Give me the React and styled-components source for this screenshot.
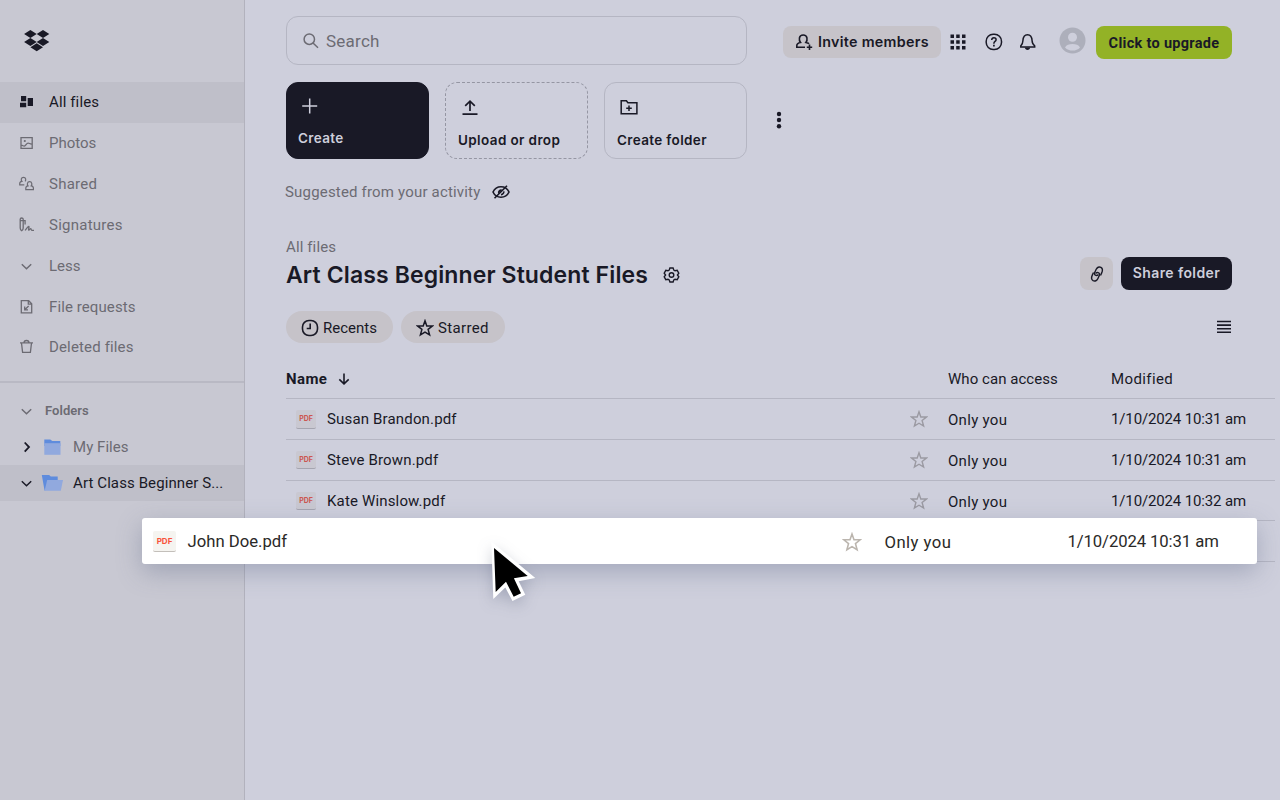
import React from "react";
import styled, { createGlobalStyle } from "styled-components";

const ink = "#191926";
const muted = "#6c6b73";
const line = "#b5b6c3";
const bodyFont = `Roboto, "Liberation Sans", sans-serif`;
const headFont = `Inter, "Liberation Sans", sans-serif`;

const GlobalStyle = createGlobalStyle`
    * {
        box-sizing: border-box;
    }

    body {
        margin: 0;
        font-family: ${bodyFont};
        font-size: 15px;
        line-height: 18px;
        color: ${ink};
        background: #cecfdc;
    }

    svg {
        display: block;
        flex: none;
    }

    button {
        font: inherit;
        color: inherit;
        border: none;
        background: none;
        padding: 0;
    }
`;

const Page = styled.div`
    position: relative;
    display: flex;
    width: 1280px;
    height: 800px;
    overflow: hidden;
`;

//Sidebar
const Sidebar = styled.aside`
    width: 245px;
    flex: none;
    background: #c8c8d2;
    border-right: 1px solid #b2b2bd;
`;

const Brand = styled.div`
    height: 82px;
    padding: 30px 0 0 24px;
`;

const Nav = styled.nav`
    display: flex;
    flex-direction: column;
    height: 301px;
    border-bottom: 2px solid #b9b9c4;
`;

const NavItem = styled.a`
    display: flex;
    align-items: center;
    gap: 13px;
    height: 40.83px;
    padding-left: 16px;
    color: ${(props) => (props.$active ? ink : muted)};
    background: ${(props) => (props.$active ? "#bfbfc9" : "transparent")};
`;

const Folders = styled.div`
    padding-top: 10px;
`;

const FoldersTitle = styled.div`
    display: flex;
    align-items: center;
    gap: 9px;
    height: 35.5px;
    padding-left: 16px;
    font-size: 13px;
    font-weight: 600;
    color: ${muted};
`;

const FolderItem = styled.a`
    display: flex;
    align-items: center;
    height: 36.4px;
    padding-left: 16px;
    color: ${(props) => (props.$active ? ink : muted)};
    background: ${(props) => (props.$active ? "#bfbfc9" : "transparent")};

    svg:nth-child(2) {
        margin: 0 10px 0 5px;
    }
`;

//Main
const Main = styled.main`
    flex: 1;
    display: flex;
    flex-direction: column;
    padding: 16px 5px 0 41px;
`;

const Text = styled.span`
    white-space: nowrap;
    letter-spacing: ${(props) => props.$track || 0}px;
`;

const TopBar = styled.header`
    display: flex;
    height: 49px;
    margin-right: 43px;
`;

const Search = styled.div`
    display: flex;
    align-items: center;
    gap: 6px;
    width: 461px;
    padding-left: 15px;
    border: 1px solid ${line};
    border-radius: 12px;
    font-size: 17px;
    color: ${muted};
`;

const TopActions = styled.div`
    flex: 1;
    display: flex;
    align-items: center;
    padding: 3px 0 0 36px;
`;

const InviteButton = styled.button`
    display: flex;
    align-items: center;
    gap: 4px;
    width: 158px;
    height: 32px;
    margin-right: 7px;
    padding-left: 12px;
    border-radius: 8px;
    background: #c6c3c9;
    font-family: ${headFont};
    font-size: 14.3px;
    font-weight: 600;
`;

const TopIcons = styled.div`
    display: flex;
    align-items: center;
    width: 148px;

    svg:nth-child(2) {
        margin-left: 16px;
    }

    svg:nth-child(3) {
        margin-left: 13.5px;
    }

    svg:nth-child(4) {
        margin: -3px 0 0 21px;
    }
`;

const UpgradeButton = styled.button`
    width: 136px;
    height: 33px;
    margin-top: 1px;
    padding-top: 2px;
    border-radius: 8px;
    background: #93b226;
    font-size: 14.5px;
    font-weight: 700;
`;

const Cards = styled.div`
    display: flex;
    align-items: center;
    gap: 16.5px;
    margin-top: 16.5px;
    height: 77px;
`;

const Card = styled.button`
    display: flex;
    flex-direction: column;
    justify-content: space-between;
    align-items: flex-start;
    width: 142.5px;
    height: 77px;
    padding: ${(props) => (props.$dark ? 13 : 14)}px 0 ${(props) => (props.$dark ? 10.5 : 9)}px ${(props) => (props.$dark ? 11 : 12)}px;
    border: 1px ${(props) => (props.$dashed ? "dashed #9596a3" : "solid " + (props.$dark ? ink : line))};
    border-radius: 12px;
    background: ${(props) => (props.$dark ? ink : "transparent")};
    color: ${(props) => (props.$dark ? "#cecfdc" : ink)};
    font-family: ${headFont};
    font-size: 13.5px;
    font-weight: 600;
`;

const MoreButton = styled.button`
    margin-left: 11px;
`;

const Suggested = styled.div`
    display: flex;
    align-items: center;
    gap: 10.5px;
    margin: 23.5px 0 0 -1px;
    height: 20px;
    color: ${muted};
`;

const FolderHeader = styled.div`
    display: flex;
    align-items: flex-end;
    height: 54px;
    margin: 36px 43px 0 0;
`;

const FolderHeading = styled.div`
    flex: 1;
    height: 54px;
    color: ${muted};
`;

const FolderTitle = styled.h1`
    display: flex;
    align-items: center;
    gap: 15px;
    margin: 0;
    height: 37px;
    font-family: ${headFont};
    font-size: 23px;
    font-weight: 600;
    color: ${ink};
`;

const LinkButton = styled.button`
    display: flex;
    align-items: center;
    justify-content: center;
    width: 33px;
    height: 33px;
    margin: 0 8px 2px 0;
    border-radius: 8px;
    background: #c6c3c9;
`;

const ShareButton = styled.button`
    width: 111px;
    height: 33px;
    margin-bottom: 2px;
    padding-bottom: 1px;
    border-radius: 8px;
    background: ${ink};
    color: #cecfdc;
    font-family: ${headFont};
    font-size: 14px;
    font-weight: 600;
`;

const Filters = styled.div`
    display: flex;
    align-items: center;
    gap: 8px;
    height: 32px;
    margin: 19px 43px 0 0;
`;

const Chip = styled.button`
    display: flex;
    align-items: center;
    gap: 4px;
    width: ${(props) => props.$width}px;
    height: 32px;
    padding: 1px 0 0 15px;
    border-radius: 16px;
    background: #c6c3c9;
`;

const ViewToggle = styled.button`
    margin-left: auto;
`;

const Table = styled.div`
    margin-top: 15px;
`;

const HeadRow = styled.div`
    display: grid;
    grid-template-columns: 662px 163px 1fr;
    align-items: center;
    height: 41px;
    padding-top: 1px;
    border-bottom: 1px solid ${line};
`;

const SortName = styled.div`
    display: flex;
    align-items: center;
    gap: 11px;
    font-weight: 700;
`;

const Row = styled.div`
    display: grid;
    grid-template-columns: 31px 583px 38px 163px 1fr;
    align-items: center;
    height: 40.8px;
    padding: 1px 0 0 10px;
    border-bottom: 1.5px solid ${line};
`;

const AccessCell = styled.div`
    padding-top: 2px;
`;

const PdfBadge = styled.span`
    display: flex;
    align-items: center;
    justify-content: center;
    width: ${(props) => (props.$large ? 23 : 20)}px;
    height: ${(props) => (props.$large ? 21 : 18.5)}px;
    border-radius: 2px;
    background: ${(props) => (props.$large ? "#f5f4f0" : "#c9c8d1")};
    border-bottom: 1px solid ${(props) => (props.$large ? "#c3bfba" : "#a5a5b0")};
    color: ${(props) => (props.$large ? "#f9533a" : "#cc5650")};
    font-family: ${headFont};
    font-size: ${(props) => (props.$large ? 8 : 7)}px;
    font-weight: 700;
    line-height: 1;
`;

//The row being dragged floats over the page
const DraggedRow = styled.div`
    position: absolute;
    left: 142px;
    top: 518px;
    width: 1115px;
    height: 45.5px;
    display: grid;
    grid-template-columns: 34.5px 654.5px 42.5px 183px 1fr;
    align-items: center;
    padding: 1.5px 0 0 11px;
    border-radius: 3px;
    background: #fff;
    color: #2a2927;
    font-size: 16.7px;
    box-shadow: 0 8px 24px rgba(90, 100, 130, 0.36);
`;

const Cursor = styled.svg`
    position: absolute;
    left: 485px;
    top: 538px;
    filter: drop-shadow(0 5px 7px rgba(60, 70, 100, 0.25));
`;

function Icon({ width = 20, height = 20, weight = 1.3, color = "currentColor", children }) {
    return (
        <svg width={width} height={height} viewBox={`0 0 ${width} ${height}`} fill="none" stroke={color} strokeWidth={weight}>
            {children}
        </svg>
    );
}

const ChevronDown = ({ color }) => (
    <Icon weight={1.5} color={color}>
        <path d="M5.8 8.3l4.7 4.4 4.7-4.4" />
    </Icon>
);

const Star = ({ size = 18, color, weight = 1.4 }) => (
    <svg width={size} height={size} viewBox="0 0 18 18" fill="none" stroke={color || "currentColor"} strokeWidth={weight}>
        <path d="M9 1.8l1.8 5.2h5.6l-4.3 3.4 1.5 5.6L9 13.2 4.4 16l1.5-5.6L1.6 7h5.6z" />
    </svg>
);

const navItems = [
    {
        name: "All files",
        track: 0.12,
        icon: (
            <Icon>
                <path fill="currentColor" stroke="none" d="M5 4h5.2v5.2H5zM4 10.7h6.2v4.6H4zM11.7 6H17v8h-5.3z" />
            </Icon>
        ),
    },
    {
        name: "Photos",
        track: 0,
        icon: (
            <Icon>
                <path d="M5 4.6h11.2v10.8H5zM5 12.2c1.8-.2 2.1 1 3.3.9 1.6-.1 2-3 3.8-3 1.6 0 1.6 1.2 4.1 1" />
                <circle cx="8.8" cy="8" r="1.1" fill="currentColor" stroke="none" />
            </Icon>
        ),
    },
    {
        name: "Shared",
        track: 0.25,
        icon: (
            <Icon weight={1.2}>
                <path d="M8.3 10.9H3.7V9.7c0-1.3.8-2.1 2.2-2.3-1-1.1-1-4.1 1.6-4.1s2.6 3 1.6 4.1" />
                <path d="M9.8 15.7v-1.5c0-1.3.8-2.1 2.2-2.3-1-1.2-1-4.2 1.6-4.2s2.6 3 1.6 4.2c1.4.2 2.2 1 2.2 2.3v1.5z" />
            </Icon>
        ),
    },
    {
        name: "Signatures",
        track: 0.25,
        icon: (
            <Icon weight={1.3}>
                <path d="M4.2 13V4.3C4.2 3.5 5 3 5.7 3s1.5.5 1.5 1.3V13c0 1.5-.6 2.3-1.5 2.8C4.8 15.3 4.2 14.5 4.2 13zM4.2 5.6h4.9v3.8" />
                <path d="M9 15.4c1.4-1.6 2.7-4 3.7-3.9 1 .1-.8 3.5.1 3.6.8.1 1.2-1.5 2-1.4.7.1.2 1.6 1 1.6H18" />
            </Icon>
        ),
    },
    { name: "Less", track: 0, icon: <ChevronDown /> },
    {
        name: "File requests",
        track: 0.1,
        icon: (
            <Icon>
                <path d="M5.3 3.7h7.4l3 3v9.1H5.3zM12.3 4v3.2h3.2M12.6 9l-3.8 3.8M8.7 9.6v3.3H12" />
            </Icon>
        ),
    },
    {
        name: "Deleted files",
        track: 0.15,
        icon: (
            <Icon>
                <path d="M4 5.9h13M5.5 6l1.1 9.4h7.8L15.5 6M8 5.8c0-1.5.8-2.3 2.5-2.3s2.5.8 2.5 2.3" />
            </Icon>
        ),
    },
];

const files = [
    { name: "Susan Brandon.pdf", modified: "1/10/2024 10:31 am" },
    { name: "Steve Brown.pdf", modified: "1/10/2024 10:31 am" },
    { name: "Kate Winslow.pdf", modified: "1/10/2024 10:32 am" },
];

function SidePanel() {
    return (
        <Sidebar>
            <Brand>
                <svg width="26" height="22" viewBox="0 0 26 22" fill={ink}>
                    <path d="M6.4 0l6.3 4-6.3 4L.1 4zM19 0l6.3 4L19 8l-6.3-4zM6.4 8l6.3 4-6.3 4L.1 12zM19 8l6.3 4-6.3 4-6.3-4zM12.7 13.3l6.3 4-6.3 4-6.3-4z" />
                </svg>
            </Brand>
            <Nav>
                {navItems.map((item, i) => (
                    <NavItem key={item.name} $active={i === 0}>
                        {item.icon}
                        <Text $track={item.track}>{item.name}</Text>
                    </NavItem>
                ))}
            </Nav>
            <Folders>
                <FoldersTitle>
                    <ChevronDown />
                    <Text $track={0.05}>Folders</Text>
                </FoldersTitle>
                <FolderItem>
                    <Icon weight={1.8} color={ink}>
                        <path d="M8.7 5.5l4.3 4.6-4.3 4.6" />
                    </Icon>
                    <svg width="22" height="20" viewBox="0 0 22 20">
                        <path fill="#5f8cdd" d="M3.3 2.5h6l2 1.4h8v5h-16z" />
                        <path fill="#91a9de" d="M3.3 6.2h16.2v11.6H3.3z" />
                    </svg>
                    <Text $track={0.05}>My Files</Text>
                </FolderItem>
                <FolderItem $active>
                    <ChevronDown color={ink} />
                    <svg width="22" height="20" viewBox="0 0 22 20">
                        <path fill="#5f8cdd" d="M.8 2h7.3l1.7 1.6h6.9V9L3.6 17.8z" />
                        <path fill="#91a9de" d="M6.2 7H22l-2.2 10.8H3.6z" />
                    </svg>
                    <Text $track={0.1}>Art Class Beginner S...</Text>
                </FolderItem>
            </Folders>
        </Sidebar>
    );
}

function Header() {
    return (
        <TopBar>
            <Search>
                <Icon width={18} height={18} weight={1.5}>
                    <circle cx="7.3" cy="7.2" r="5.2" />
                    <path d="M11 11l5 4.8" />
                </Icon>
                <Text $track={0.25}>Search</Text>
            </Search>
            <TopActions>
                <InviteButton>
                    <Icon width={19} height={20} weight={1.6}>
                        <path d="M10 15.3H1.8v-1.5c0-2 1.3-2.9 3.7-3.3-1.7-2.2-2-7.5 2.7-7.5s4.4 5.3 2.7 7.5c1.4.2 2.5.6 3.1 1.3M14.5 12.5v5.4M11.8 15.2h5.4" />
                    </Icon>
                    <Text $track={0.3}>Invite members</Text>
                </InviteButton>
                <TopIcons>
                    <Icon width={20} height={20}>
                        <path fill="currentColor" stroke="none" d="M2.5 2.5H6V6H2.5zM8.2 2.5h3.5V6H8.2zM14 2.5h3.5V6H14zM2.5 8.2H6v3.5H2.5zM8.2 8.2h3.5v3.5H8.2zM14 8.2h3.5v3.5H14zM2.5 14H6v3.5H2.5zM8.2 14h3.5v3.5H8.2zM14 14h3.5v3.5H14z" />
                    </Icon>
                    <Icon weight={1.5}>
                        <rect x="2.2" y="2.2" width="15.3" height="15.3" rx="7" />
                        <path d="M7.7 8c.1-1.5 1-2.2 2.2-2.2 1.3 0 2.2.8 2.2 1.9 0 1.7-2.2 1.8-2.2 3.5v.5" />
                        <path strokeWidth="1.7" d="M9.9 12.7v1.7" />
                    </Icon>
                    <Icon weight={1.5}>
                        <path d="M2.8 15v-1.2c1.5-1.2 2-2.4 2.1-5C5.1 5 6.5 2.8 9.5 2.8S13.9 5 14.1 8.8c.1 2.6.6 3.8 2.6 5V15z" />
                        <path fill="currentColor" stroke="none" d="M6.8 15.5h5.4c-.3 1.7-1.2 2.4-2.7 2.4s-2.4-.7-2.7-2.4z" />
                    </Icon>
                    <svg width="27" height="27" viewBox="0 0 27 27">
                        <circle cx="13.5" cy="13.5" r="13" fill="#adafbb" />
                        <circle cx="13.5" cy="10.3" r="4.5" fill="#cecfdc" />
                        <path fill="#cecfdc" d="M6 20.5c1.5-2.8 4-3.6 7.5-3.6s6 .8 7.5 3.6c-2 2.2-4.5 3.1-7.5 3.1S8 22.7 6 20.5z" />
                    </svg>
                </TopIcons>
                <UpgradeButton>
                    <Text $track={0.3}>Click to upgrade</Text>
                </UpgradeButton>
            </TopActions>
        </TopBar>
    );
}

function FileTable() {
    return (
        <Table>
            <HeadRow>
                <SortName>
                    <Text $track={0.4}>Name</Text>
                    <Icon width={12} height={14} weight={1.6}>
                        <path d="M6 1.5v10.2M1.3 7.3L6 11.8l4.7-4.5" />
                    </Icon>
                </SortName>
                <Text $track={0.05}>Who can access</Text>
                <Text $track={0.4}>Modified</Text>
            </HeadRow>
            {files.map((file) => (
                <Row key={file.name}>
                    <PdfBadge>PDF</PdfBadge>
                    <Text $track={0.16}>{file.name}</Text>
                    <Star color="#9b9aa2" />
                    <AccessCell>
                        <Text $track={0.3}>Only you</Text>
                    </AccessCell>
                    <Text $track={-0.14}>{file.modified}</Text>
                </Row>
            ))}
            <Row />
        </Table>
    );
}

function App() {
    return (
        <Page>
            <GlobalStyle />
            <SidePanel />
            <Main>
                <Header />
                <Cards>
                    <Card $dark>
                        <Icon weight={1.5}>
                            <path d="M11.7 2.5v15M4.2 10h15" />
                        </Icon>
                        <Text $track={0.35}>Create</Text>
                    </Card>
                    <Card $dashed>
                        <Icon weight={1.7}>
                            <path d="M4.5 17.2h15M12 14V4.5M7.2 8.8L12 4.2l4.8 4.6" />
                        </Icon>
                        <Text $track={0.38}>Upload or drop</Text>
                    </Card>
                    <Card>
                        <Icon width={22} weight={1.5}>
                            <path d="M4.2 3.8h5.2l1.5 2h9v11H4.2zM12 8.5v5.6M9.2 11.3h5.6" />
                        </Icon>
                        <Text $track={0.35}>Create folder</Text>
                    </Card>
                    <MoreButton>
                        <svg width="10" height="20" viewBox="0 0 10 20" fill={ink}>
                            <circle cx="5" cy="4" r="2.2" />
                            <circle cx="5" cy="10" r="2.2" />
                            <circle cx="5" cy="16.2" r="2.2" />
                        </svg>
                    </MoreButton>
                </Cards>
                <Suggested>
                    <Text $track={0.18}>Suggested from your activity</Text>
                    <Icon color={ink} weight={1.6}>
                        <path d="M2 10c1.5-3.3 4.2-5.2 8-5.2s6.5 1.9 8 5.2c-1.5 3.3-4.2 5.2-8 5.2S3.5 13.3 2 10zM3.5 16.2L16 3.8" />
                        <path fill={ink} stroke="none" d="M7.2 12A3.2 3.2 0 0 1 11.5 7.7z" />
                        <path d="M12.8 9.3c.2 1.8-.9 3.2-2.8 3.4" />
                    </Icon>
                </Suggested>
                <FolderHeader>
                    <FolderHeading>
                        <Text $track={0.12}>All files</Text>
                        <FolderTitle>
                            <Text $track={0.12}>Art Class Beginner Student Files</Text>
                            <Icon width={17} height={18} weight={1.4}>
                                <path d="M6.9 2h3.2l.7 2.1 1.2.7 2.2-.5 1.6 2.8L14.4 9l1.4 1.9-1.6 2.8-2.2-.5-1.2.7-.7 2.1H6.9l-.7-2.1-1.2-.7-2.2.5-1.6-2.8L2.6 9 1.2 7.1l1.6-2.8 2.2.5 1.2-.7z" />
                                <circle cx="8.5" cy="9" r="2.3" />
                            </Icon>
                        </FolderTitle>
                    </FolderHeading>
                    <LinkButton>
                        <Icon width={20} height={20} weight={1.4}>
                            <path d="M13.5 11.5l1.2-2.6c.9-2 1-4.5-.8-5.6-1.9-1-3.8.2-4.7 2L7.800 8.200c-.7 1.500-.2 2.900 1.100 3.200.9.200 1.700-.1 2.600-.7" />
                            <path d="M6.5 8.5l-1.2 2.6c-.9 2-1 4.5.8 5.6 1.9 1 3.8-.2 4.7-2l1.4-2.9c.7-1.500.2-2.900-1.100-3.200-.9-.2-1.700.1-2.600.7" />
                        </Icon>
                    </LinkButton>
                    <ShareButton>
                        <Text $track={0.4}>Share folder</Text>
                    </ShareButton>
                </FolderHeader>
                <Filters>
                    <Chip $width={107}>
                        <Icon width={18} height={18} weight={1.6}>
                            <rect x="1.5" y="1.5" width="15" height="15" rx="6.5" />
                            <path d="M9.2 4.5v5H5.7" />
                        </Icon>
                        <Text $track={0}>Recents</Text>
                    </Chip>
                    <Chip $width={104}>
                        <Star weight={1.5} />
                        <Text $track={0.35}>Starred</Text>
                    </Chip>
                    <ViewToggle>
                        <Icon width={16} height={14} weight={1.6}>
                            <path d="M1 1.5h14M1 5.1h14M1 8.7h14M1 12.3h14" />
                        </Icon>
                    </ViewToggle>
                </Filters>
                <FileTable />
            </Main>
            <DraggedRow>
                <PdfBadge $large>PDF</PdfBadge>
                <Text $track={0}>John Doe.pdf</Text>
                <Star size={20} color="#bbb5ae" />
                <AccessCell>
                    <Text $track={0.45}>Only you</Text>
                </AccessCell>
                <Text $track={-0.1}>1/10/2024 10:31 am</Text>
            </DraggedRow>
            <Cursor width="60" height="72" viewBox="485 538 60 72">
                <path d="M491.3 541.5L493.3 599 505.3 587.5 512.5 601 525.3 594.8 518.7 581.3 535.3 578z" fill="#fff" />
                <path d="M494 548L495.7 592 506 581.8 513.7 596.7 521 593.2 513.9 578.3 527.7 576z" fill="#000" />
            </Cursor>
        </Page>
    );
}

export default App;
